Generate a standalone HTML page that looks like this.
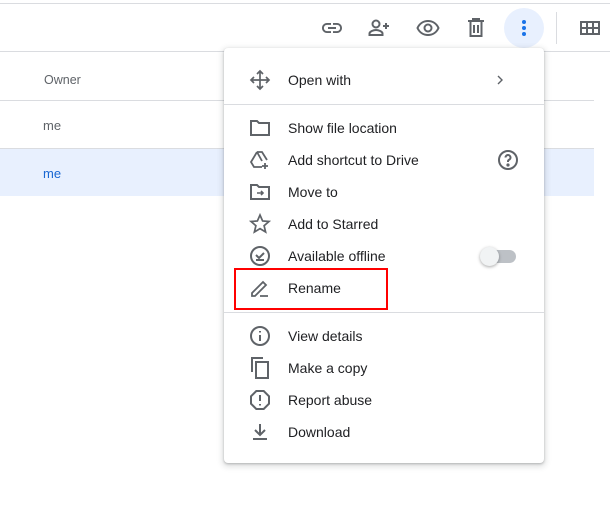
<!DOCTYPE html>
<html><head><style>
body{margin:0;width:610px;height:507px;background:#fff;position:relative;overflow:hidden;font-family:"Liberation Sans",Arial,sans-serif}
.abs{position:absolute}
.hl{position:absolute;height:1px;background:#dadce0}
.menu{position:absolute;left:224px;top:48px;width:320px;height:415px;background:#fff;border-radius:4px;box-shadow:0 2px 6px 2px rgba(60,64,67,.15),0 1px 2px rgba(60,64,67,.3)}
.it{position:absolute;left:0;width:320px;height:32px;line-height:32px;font-size:14px;color:#202124}
.it span{position:absolute;left:64px;top:0}
.it svg{position:absolute;left:24px;top:4px}
</style></head><body>
<div class="hl" style="left:0;top:3px;width:610px"></div>
<div class="hl" style="left:0;top:51px;width:610px"></div>
<div class="abs" style="left:44px;top:73px;font-size:12.5px;color:#5f6368">Owner</div>
<div class="hl" style="left:0;top:100px;width:594px"></div>
<div class="abs" style="left:43px;top:118px;font-size:13px;color:#5f6368">me</div>
<div class="hl" style="left:0;top:148px;width:594px"></div>
<div class="abs" style="left:0;top:149px;width:594px;height:47px;background:#e8f0fe"></div>
<div class="abs" style="left:43px;top:166px;font-size:13px;color:#1967d2">me</div>
<div class="abs" style="left:556px;top:12px;width:1px;height:32px;background:#dadce0"></div>
<svg class="abs" style="left:320px;top:16px" width="24" height="24" viewBox="0 0 24 24" fill="#5f6368"><path d="M3.9 12c0-1.7 1.4-3.1 3.1-3.1h4V7H7c-2.8 0-5 2.2-5 5s2.2 5 5 5h4v-1.9H7c-1.7 0-3.1-1.4-3.1-3.1zM8 13h8v-2H8v2zm9-6h-4v1.9h4c1.7 0 3.1 1.4 3.1 3.1s-1.4 3.1-3.1 3.1h-4V17h4c2.8 0 5-2.2 5-5s-2.2-5-5-5z"/></svg>
<svg class="abs" style="left:367px;top:16px" width="24" height="24" viewBox="0 0 24 24" fill="none" stroke="#5f6368" stroke-width="2"><circle cx="9" cy="8" r="3.5"/><path d="M2.5 19v-1.5c0-2 4-3.5 6.5-3.5s6.5 1.5 6.5 3.5V19z"/><path d="M19 7v6M16 10h6"/></svg>
<svg class="abs" style="left:416px;top:16px" width="24" height="24" viewBox="0 0 24 24" fill="none" stroke="#5f6368" stroke-width="2"><path d="M1.5 12C3.5 7.5 7.5 5 12 5s8.5 2.5 10.5 7c-2 4.5-6 7-10.5 7S3.5 16.5 1.5 12z"/><circle cx="12" cy="12" r="3.5"/></svg>
<svg class="abs" style="left:464px;top:16px" width="24" height="24" viewBox="0 0 24 24" fill="none" stroke="#5f6368" stroke-width="2"><path d="M4 5h16M9 5V3h6v2M6.5 5v15h11V5M10 9v8M14 9v8"/></svg>
<div class="abs" style="left:504px;top:8px;width:40px;height:40px;border-radius:50%;background:#e8f0fe"></div>
<svg class="abs" style="left:512px;top:16px" width="24" height="24" viewBox="0 0 24 24" fill="#1a73e8"><circle cx="12" cy="6" r="2"/><circle cx="12" cy="12" r="2"/><circle cx="12" cy="18" r="2"/></svg>
<svg class="abs" style="left:578px;top:16px" width="24" height="24" viewBox="0 0 24 24" fill="none" stroke="#5f6368" stroke-width="2"><path d="M3 6h18v12H3zM3 12h18M9 6v12M15 6v12"/></svg>

<div class="menu">
<div class="it" style="top:16px"><svg width="24" height="24" viewBox="0 0 24 24" fill="none" stroke="#5f6368" stroke-width="1.7"><path d="M12 3v18M3 12h18M9 6l3-3 3 3M9 18l3 3 3-3M6 9l-3 3 3 3M18 9l3 3-3 3"/></svg><span>Open with</span><svg style="left:268px;top:8px" width="16" height="16" viewBox="0 0 16 16" fill="none" stroke="#5f6368" stroke-width="1.4"><path d="M6 4l4 4-4 4"/></svg></div>
<div class="hl" style="left:0;top:56px;width:320px"></div>
<div class="it" style="top:64px"><svg width="24" height="24" viewBox="0 0 24 24" fill="none" stroke="#5f6368" stroke-width="2"><path d="M3 5h6l2 2h10v12H3z"/></svg><span>Show file location</span></div>
<div class="it" style="top:96px"><svg width="24" height="24" viewBox="0 0 24 24" fill="none" stroke="#5f6368" stroke-width="1.8"><path d="M9 4h5l5 8M9 4l-6 10 3 5h8M9 4l5 9M17 15v6M14 18h6"/></svg><span>Add shortcut to Drive</span><svg style="left:272px" width="24" height="24" viewBox="0 0 24 24" fill="none" stroke="#5f6368" stroke-width="2"><circle cx="12" cy="12" r="9"/><path d="M9.5 9.5a2.5 2.5 0 1 1 3.5 2.3c-.7.4-1 .9-1 1.7v.5"/><circle cx="12" cy="17" r=".6" fill="#5f6368"/></svg></div>
<div class="it" style="top:128px"><svg width="24" height="24" viewBox="0 0 24 24" fill="none" stroke="#5f6368" stroke-width="2"><path d="M3 5h6l2 2h10v12H3z"/><path d="M9 13h6M13 11l2 2-2 2" stroke-width="1.6"/></svg><span>Move to</span></div>
<div class="it" style="top:160px"><svg width="24" height="24" viewBox="0 0 24 24" fill="none" stroke="#5f6368" stroke-width="1.7"><path d="M12 3l2.6 6 6.4.5-4.9 4.2 1.5 6.3L12 16.6 6.4 20l1.5-6.3L3 9.5l6.4-.5z"/></svg><span>Add to Starred</span></div>
<div class="it" style="top:192px"><svg width="24" height="24" viewBox="0 0 24 24" fill="none" stroke="#5f6368" stroke-width="2"><circle cx="12" cy="12" r="9"/><path d="M8 11l3 3 5-5M8 16h8"/></svg><span>Available offline</span>
<div class="abs" style="left:260px;top:10px;width:32px;height:13px;border-radius:7px;background:#bdc1c6"></div>
<div class="abs" style="left:256px;top:7px;width:19px;height:19px;border-radius:50%;background:#f1f3f4;box-shadow:0 1px 3px rgba(0,0,0,.35)"></div></div>
<div class="it" style="top:224px"><svg width="24" height="24" viewBox="0 0 24 24" fill="none" stroke="#5f6368" stroke-width="1.8"><path d="M4 20v-3L15 6l3 3L7 20zM12 20h8" /></svg><span>Rename</span></div>
<div class="abs" style="left:10px;top:220px;width:154px;height:42px;border:2px solid #f00;box-sizing:border-box"></div>
<div class="hl" style="left:0;top:264px;width:320px"></div>
<div class="it" style="top:272px"><svg width="24" height="24" viewBox="0 0 24 24" fill="none" stroke="#5f6368" stroke-width="2"><circle cx="12" cy="12" r="9"/><path d="M12 11v6M12 7v1.5"/></svg><span>View details</span></div>
<div class="it" style="top:304px"><svg width="24" height="24" viewBox="0 0 24 24" fill="none" stroke="#5f6368" stroke-width="2"><path d="M15 2H4v14M8 6h12v16H8z"/></svg><span>Make a copy</span></div>
<div class="it" style="top:336px"><svg width="24" height="24" viewBox="0 0 24 24" fill="none" stroke="#5f6368" stroke-width="2"><path d="M8.3 3h7.4L21 8.3v7.4L15.7 21H8.3L3 15.7V8.3z"/><path d="M12 7v6M12 16v1.5"/></svg><span>Report abuse</span></div>
<div class="it" style="top:368px"><svg width="24" height="24" viewBox="0 0 24 24" fill="none" stroke="#5f6368" stroke-width="2"><path d="M12 4v11M7 10l5 5 5-5M5 19h14"/></svg><span>Download</span></div>
</div>
</body></html>
